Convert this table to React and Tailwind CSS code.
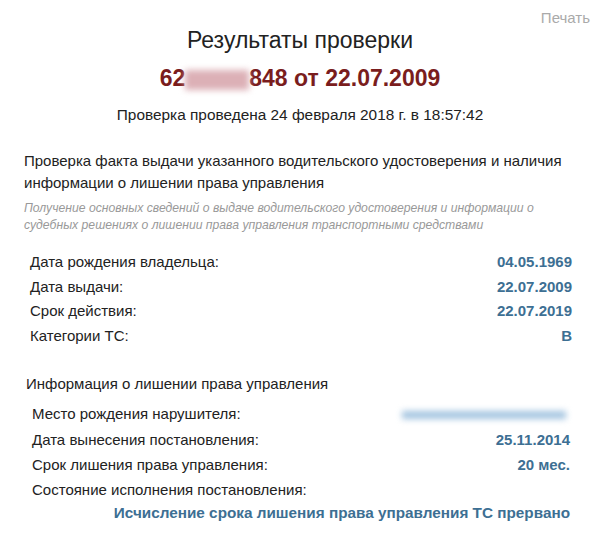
import React from 'react';

const owner = [
  { label: 'Дата рождения владельца:', value: '04.05.1969' },
  { label: 'Дата выдачи:', value: '22.07.2009' },
  { label: 'Срок действия:', value: '22.07.2019' },
  { label: 'Категории ТС:', value: 'B' },
];

const Row = ({ label, children, h = 'h-[24.5px]' }) => (
  <div className={`flex items-center justify-between ${h}`}>
    <span>{label}</span>
    <span className="font-bold text-[#3d6f93]">{children}</span>
  </div>
);

const App = () => {
  return (
    <div
      className="w-[600px] h-[538px] bg-white text-[#222] overflow-hidden"
      style={{ fontFamily: '"Liberation Sans", Arial, sans-serif' }}
    >
      <div className="flex justify-end pr-[10px] pt-[8px] h-[26px]">
        <span className="text-[15px] leading-[20px] text-[#aaa]">Печать</span>
      </div>

      <h1 className="text-center text-[23px] leading-[28px]">Результаты проверки</h1>

      <div className="text-center text-[23px] leading-[28px] font-bold text-[#7a1d1d] mt-[10px]">
        62
        <span className="inline-block w-[64px] h-[20px] align-middle bg-[#dcb0b6] blur-[3px]"></span>
        848 от 22.07.2009
      </div>

      <p className="text-center text-[15.4px] leading-[20px] mt-[13px]">
        Проверка проведена 24 февраля 2018 г. в 18:57:42
      </p>

      <div className="px-[24px] mt-[25px]">
        <h2 className="text-[15px] leading-[22px] mr-[-8px]">
          Проверка факта выдачи указанного водительского удостоверения и наличия информации о лишении права управления
        </h2>
        <p className="italic text-[12.2px] leading-[17px] text-[#999] mt-[6px]">
          Получение основных сведений о выдаче водительского удостоверения и информации о судебных решениях о лишении права управления транспортными средствами
        </p>

        <div className="pl-[6px] pr-[4px] mt-[16px] text-[15px]">
          {owner.map((r) => (
            <Row key={r.label} label={r.label}>{r.value}</Row>
          ))}
        </div>

        <div className="mt-[26px] pl-[2px] text-[15px] leading-[20px]">
          Информация о лишении права управления
        </div>

        <div className="pl-[8px] pr-[6px] mt-[8px] text-[15px]">
          <Row label="Место рождения нарушителя:" h="h-[25.3px]">
            <span className="inline-block w-[164px] h-[8px] align-middle bg-[#a3c4e0] blur-[3px] mr-[4px]"></span>
          </Row>
          <Row label="Дата вынесения постановления:" h="h-[25.3px]">25.11.2014</Row>
          <Row label="Срок лишения права управления:" h="h-[25.3px]">20 мес.</Row>
          <div className="h-[25.3px] flex items-center">Состояние исполнения постановления:</div>
          <div className="text-[15.3px] font-bold text-[#3d6f93] h-[20px] flex items-center justify-end">
            Исчисление срока лишения права управления ТС прервано
          </div>
        </div>
      </div>
    </div>
  );
};

export default App;
